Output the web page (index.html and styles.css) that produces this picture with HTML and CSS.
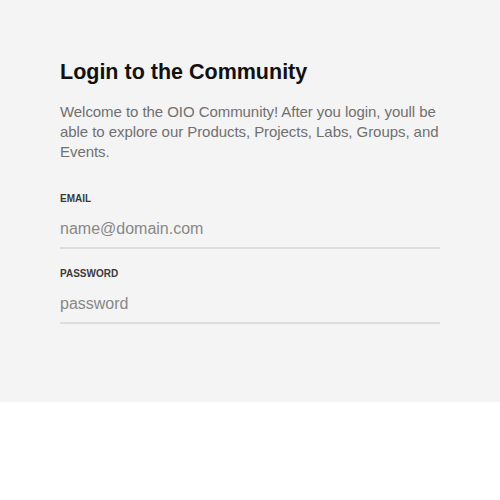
FILE: index.html
```html
<!DOCTYPE html>
<html>
<head>
<meta charset="utf-8">
<link rel="stylesheet" href="styles.css">
</head>
<body>
<section class="panel">
  <h1 class="title">Login to the Community</h1>
  <p class="intro">Welcome to the OIO Community! After you login, youll be able to explore our Products, Projects, Labs, Groups, and Events.</p>
  <form class="form">
    <label class="field">
      <span class="label">Email</span>
      <input class="input" type="email" placeholder="name@domain.com">
    </label>
    <label class="field">
      <span class="label">Password</span>
      <input class="input" type="password" placeholder="password">
    </label>
  </form>
</section>
</body>
</html>
```
FILE: styles.css
```css
html, body {
  margin: 0;
  padding: 0;
  background: #ffffff;
  font-family: "Liberation Sans", Arial, sans-serif;
}
.panel {
  background: #f4f4f4;
  padding: 58px 60px 78px;
  height: 402px;
  box-sizing: border-box;
}
.title {
  margin: 0;
  font-size: 21.5px;
  line-height: 28px;
  font-weight: 700;
  color: #111;
}
.intro {
  margin: 16px 0 0;
  font-size: 15px;
  line-height: 20px;
  letter-spacing: -0.06px;
  color: #707070;
}
.form {
  display: flex;
  flex-direction: column;
  gap: 19px;
  margin-top: 31px;
}
.field {
  display: flex;
  flex-direction: column;
}
.label {
  font-size: 10px;
  line-height: 12px;
  font-weight: 700;
  text-transform: uppercase;
  color: #3a3a3a;
}
.input {
  margin-top: 8px;
  border: 0;
  border-bottom: 2px solid #dddddd;
  background: transparent;
  font-family: inherit;
  font-size: 16px;
  line-height: 20px;
  padding: 6px 0 8px;
  color: #333;
  outline: none;
}
.input::placeholder {
  color: #888;
}
```
